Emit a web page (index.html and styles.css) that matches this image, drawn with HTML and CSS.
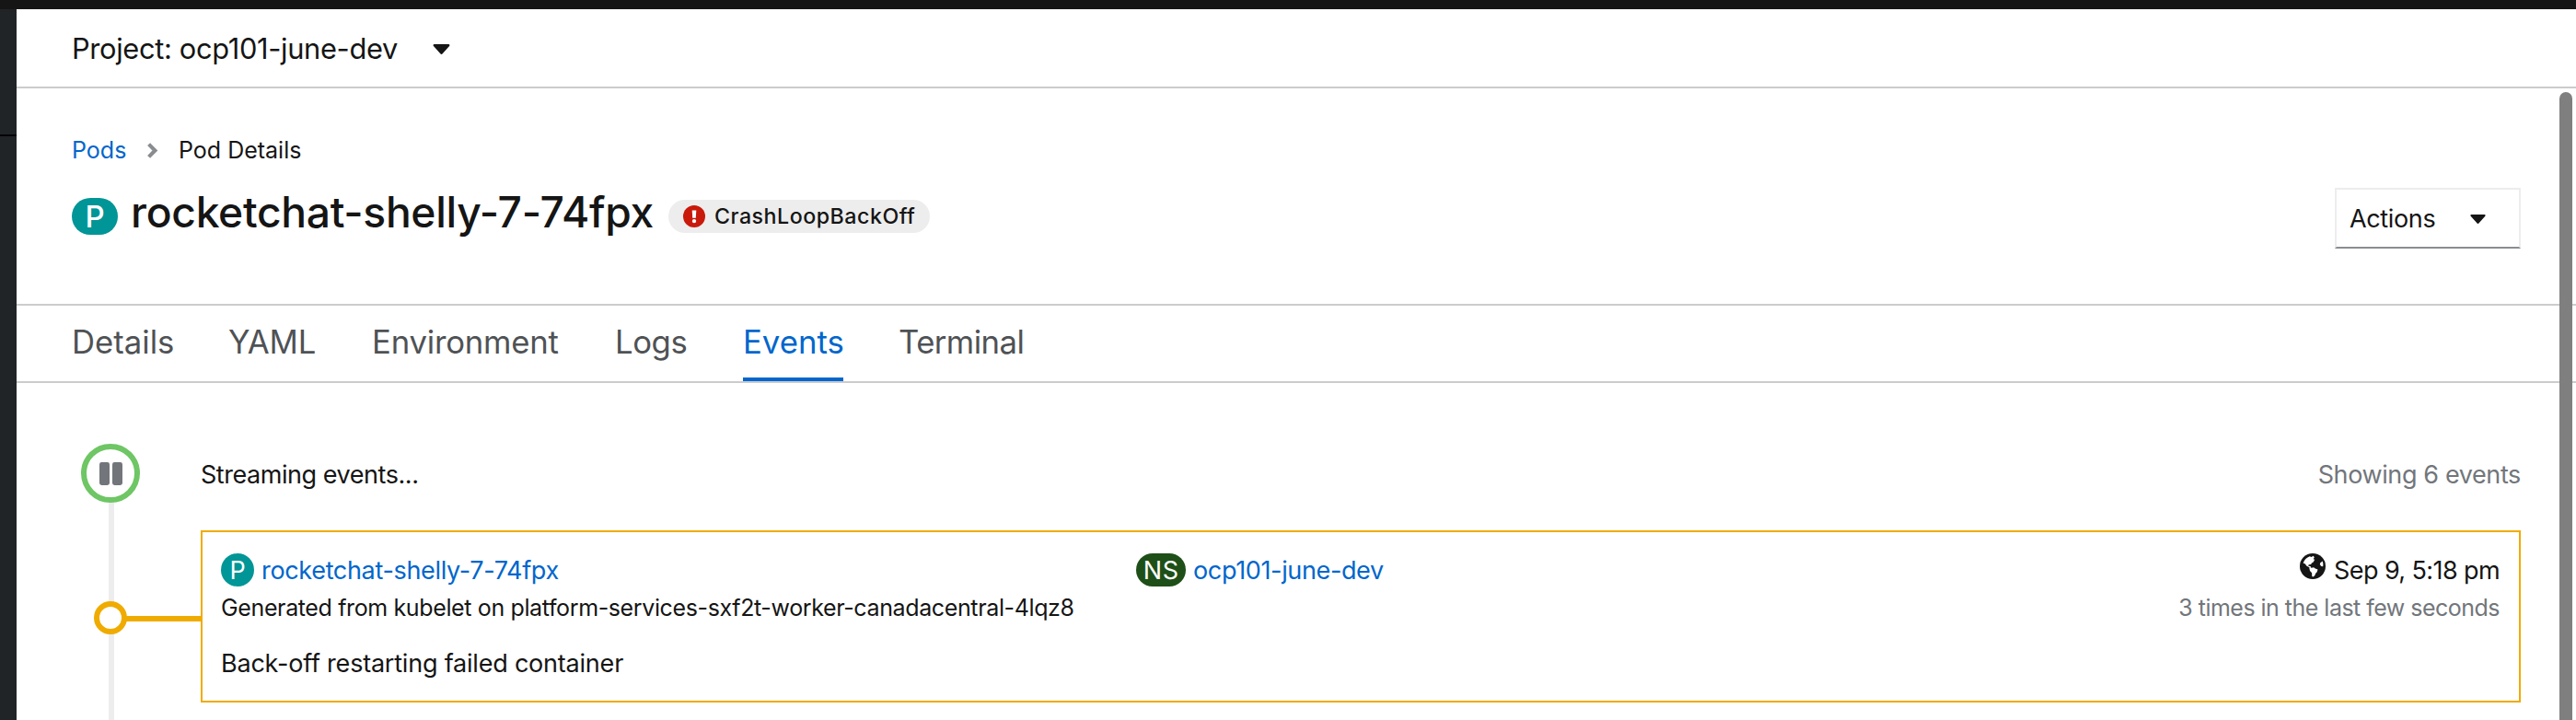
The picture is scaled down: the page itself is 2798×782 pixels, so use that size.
FILE: index.html
```html
<!DOCTYPE html>
<html lang="en">
<head>
<meta charset="utf-8">
<title>rocketchat-shelly-7-74fpx · Pod Details</title>
<link rel="stylesheet" href="styles.css">
</head>
<body>
<header class="masthead"></header>
<div class="shell">
  <nav class="sidebar"><div class="sidebar-section"></div></nav>
  <main class="main">
    <div class="project-bar">
      <span class="project-name">Project: ocp101-june-dev</span>
      <svg class="project-caret" viewBox="0 0 18 11"><path d="M1.2 0h15.6c1.1 0 1.5 1.2.8 1.9l-7.4 8.4c-.7.8-1.7.8-2.4 0L.4 1.9C-.3 1.2.1 0 1.2 0z"/></svg>
    </div>
    <div class="page">
      <ol class="breadcrumb">
        <li><a class="crumb-link">Pods</a></li>
        <li class="crumb-sep"><svg viewBox="0 0 11 17"><path d="M1.6 1.6L8.4 8.5 1.6 15.4" fill="none" stroke="#8a8d90" stroke-width="4.2" stroke-linejoin="miter"/></svg></li>
        <li class="crumb-current">Pod Details</li>
      </ol>
      <div class="heading">
        <span class="badge-large">P</span>
        <h1 class="title">rocketchat-shelly-7-74fpx</h1>
        <span class="status">
          <svg class="status-icon" viewBox="0 0 24 24"><circle cx="12" cy="12" r="12" fill="#c9190b"/><path d="M9.7 5.6h4.6l-.5 8.2h-3.6z" fill="#fff"/><circle cx="12" cy="17.1" r="2.2" fill="#fff"/></svg>
          <span class="status-text">CrashLoopBackOff</span>
        </span>
        <button class="actions"><span>Actions</span><svg class="actions-caret" viewBox="0 0 18 11"><path d="M1.2 0h15.6c1.1 0 1.5 1.2.8 1.9l-7.4 8.4c-.7.8-1.7.8-2.4 0L.4 1.9C-.3 1.2.1 0 1.2 0z"/></svg></button>
      </div>
    </div>
    <div class="tabs">
      <a class="tab tab-details">Details</a>
      <a class="tab tab-yaml">YAML</a>
      <a class="tab tab-env">Environment</a>
      <a class="tab tab-logs">Logs</a>
      <a class="tab tab-events">Events</a>
      <a class="tab tab-terminal">Terminal</a>
    </div>
    <section class="stream">
      <div class="stream-line"></div>
      <div class="stream-head">
        <span class="pause"><svg viewBox="0 0 25 25"><rect width="11" height="25" rx="2.4"/><rect x="14" width="11" height="25" rx="2.4"/></svg></span>
        <span class="stream-state">Streaming events...</span>
        <span class="stream-count">Showing 6 events</span>
      </div>
      <div class="event">
        <div class="event-marker"><span class="dot"></span><span class="connector"></span></div>
        <article class="card">
          <div class="card-top">
            <span class="resource"><span class="badge badge-pod">P</span><a class="pod-link">rocketchat-shelly-7-74fpx</a></span>
            <span class="resource"><span class="badge badge-ns">NS</span><a class="ns-link">ocp101-june-dev</a></span>
            <span class="time"><svg class="globe" viewBox="0 0 28 28"><circle cx="14" cy="14" r="14" fill="#151515"/><path d="M3.6 10.6C4.8 7.2 7.4 4.4 10.8 3.2l1.7.7 2.3-1.1 1 1.6-1.2 1.9 1.6.4-1.5 2.9-2 1.2-.5 1.1-2.5.3-.5 1.5 2.4.4.7 1.6-2-.4-3.1-1.7-1.3-2.2zM10.2 15.4l2.6.4 2.3-.6 1.7 1.4 2.7.9-.8 2.7-1.5 1.5-.9 2.3-1.7 1.4-1.3-.4-.2-3.7-2.1-2.3zM22.3 10.2l2.4-1.7c.7 1.8.9 3.8.5 5.7l-2-.2-1.4-1.9z" fill="#fff"/></svg><span class="time-text">Sep 9, 5:18 pm</span></span>
          </div>
          <div class="card-meta"><span class="source">Generated from kubelet on platform-services-sxf2t-worker-canadacentral-4lqz8</span><span class="frequency">3 times in the last few seconds</span></div>
          <p class="message">Back-off restarting failed container</p>
        </article>
      </div>
    </section>
    <div class="scrollbar"></div>
  </main>
</div>
</body>
</html>
```

FILE: styles.css
```css
* { box-sizing: border-box; }
html, body { height: 100%; margin: 0; }
body {
  display: flex;
  flex-direction: column;
  overflow: hidden;
  background: #fff;
  color: #151515;
  font-family: Inter, "Liberation Sans", sans-serif;
  font-size: 27px;
  font-variant-ligatures: none;
  white-space: nowrap;
}
svg { display: block; flex: none; overflow: visible; }
a { color: #06c; text-decoration: none; }

.masthead { flex: none; height: 10px; background: #151515; }
.shell { display: flex; flex: 1; min-height: 0; }
.sidebar { flex: none; width: 18px; background: #212427; }
.sidebar-section { height: 138px; border-bottom: 2px solid #030303; }
.main { position: relative; flex: 1; min-width: 0; overflow: hidden; }

.project-bar {
  display: flex;
  align-items: center;
  height: 86px;
  padding-left: 60px;
  border-bottom: 2px solid #ccc;
}
.project-name { width: 392px; padding-top: 1px; font-size: 30.8px; letter-spacing: -0.33px; }
.project-caret { width: 19px; height: 11px; margin-top: 3px; fill: #151515; }

.page { height: 236px; padding: 48px 60px 0; border-bottom: 2px solid #ccc; }
.breadcrumb {
  display: flex;
  align-items: center;
  height: 38px;
  margin: 0;
  padding: 0;
  list-style: none;
  font-size: 25px;
}
.crumb-link { display: block; width: 82px; }
.crumb-current { margin-left: 23px; }
.crumb-sep svg { width: 11px; height: 17px; }

.heading { display: flex; align-items: center; height: 66px; margin-top: 22px; }
.badge-large {
  width: 50px;
  height: 40px;
  margin-top: -4px;
  border-radius: 20px;
  background: #009596;
  color: #fff;
  font-size: 33px;
  font-weight: 500;
  line-height: 40px;
  text-align: center;
}
.title {
  width: 598px;
  margin: -14px 0 0;
  padding-left: 14px;
  font-size: 46.2px;
  font-weight: 500;
  line-height: 58px;
  letter-spacing: -0.3px;
}
.status {
  display: flex;
  align-items: center;
  width: 284px;
  height: 36px;
  margin-top: -4px;
  padding-left: 16px;
  border-radius: 18px;
  background: #ededed;
}
.status-icon { width: 24px; height: 24px; }
.status-text { margin-left: 10px; font-size: 23.2px; font-weight: 500; line-height: 36px; letter-spacing: 0.52px; }
.actions {
  display: flex;
  align-items: center;
  width: 202px;
  height: 66px;
  margin: 0 0 0 auto;
  padding: 0 0 0 14px;
  border: 2px solid #ededed;
  border-bottom-color: #8a8d90;
  background: #fff;
  color: #151515;
  font: inherit;
  letter-spacing: -0.35px;
}
.actions span { width: 131px; text-align: left; }
.actions-caret { width: 17px; height: 10px; margin-top: 2px; fill: #151515; }

.tabs { display: flex; height: 84px; padding-left: 60px; border-bottom: 2px solid #ccc; }
.tab {
  height: 82px;
  margin-right: 60px;
  border-bottom: 4px solid transparent;
  color: #4f5255;
  font-size: 34.7px;
  line-height: 78px;
}
.tab-details { width: 110px; }
.tab-yaml { width: 96px; letter-spacing: -0.2px; }
.tab-env { width: 204px; letter-spacing: -0.2px; }
.tab-logs { width: 79px; letter-spacing: -0.4px; }
.tab-events { width: 109px; border-color: #06c; color: #06c; }
.tab-terminal { letter-spacing: -0.55px; }

.stream { position: relative; height: 366px; padding: 66px 60px 0 70px; }
.stream-line { position: absolute; top: 98px; bottom: 0; left: 100px; width: 6px; background: #ededed; }
.stream-head { position: relative; display: flex; align-items: center; height: 64px; }
.pause {
  display: flex;
  align-items: center;
  justify-content: center;
  width: 64px;
  height: 64px;
  margin-right: 66px;
  border: 6px solid #6ec664;
  border-radius: 50%;
  background: #fff;
}
.pause svg { width: 25px; height: 25px; fill: #72767b; }
.stream-state { padding-top: 2px; letter-spacing: -0.45px; }
.stream-count { margin-left: auto; padding-top: 2px; color: #72767b; letter-spacing: -0.38px; }

.event { position: relative; display: flex; margin-top: 30px; }
.event-marker { display: flex; width: 130px; padding: 77px 0 0 14px; }
.dot { width: 36px; height: 36px; border: 6px solid #f0ab00; border-radius: 50%; background: #fff; }
.connector { flex: 1; height: 6px; margin: 16px 0 0 -2px; background: #f0ab00; }
.card { flex: 1; height: 187px; padding: 23px 21px 0 20px; border: 2px solid #f0ab00; background: #fff; }
.card-top { display: grid; grid-template-columns: 994px 1fr auto; height: 36px; line-height: 38px; }
.resource { display: flex; }
.badge { height: 36px; margin-right: 8px; border-radius: 18px; color: #fff; text-align: center; }
.badge-pod { width: 36px; background: #009596; }
.badge-ns { width: 54px; background: #1e4f18; letter-spacing: 0.6px; text-indent: 0.6px; }
.pod-link { letter-spacing: -0.33px; }
.ns-link { letter-spacing: -0.36px; }
.time { display: flex; }
.globe { width: 28px; height: 28px; margin-right: 9px; }
.time-text { letter-spacing: -0.6px; }
.card-meta { display: flex; justify-content: space-between; height: 36px; margin-top: 4px; font-size: 25px; line-height: 38px; }
.source { letter-spacing: -0.37px; }
.frequency { color: #72767b; letter-spacing: -0.52px; }
.message { margin: 25px 0 0; line-height: 38px; letter-spacing: -0.21px; }

.scrollbar {
  position: absolute;
  top: 90px;
  right: 4px;
  width: 14px;
  height: 800px;
  border-radius: 7px;
  background: #7f7f7f;
}
```
